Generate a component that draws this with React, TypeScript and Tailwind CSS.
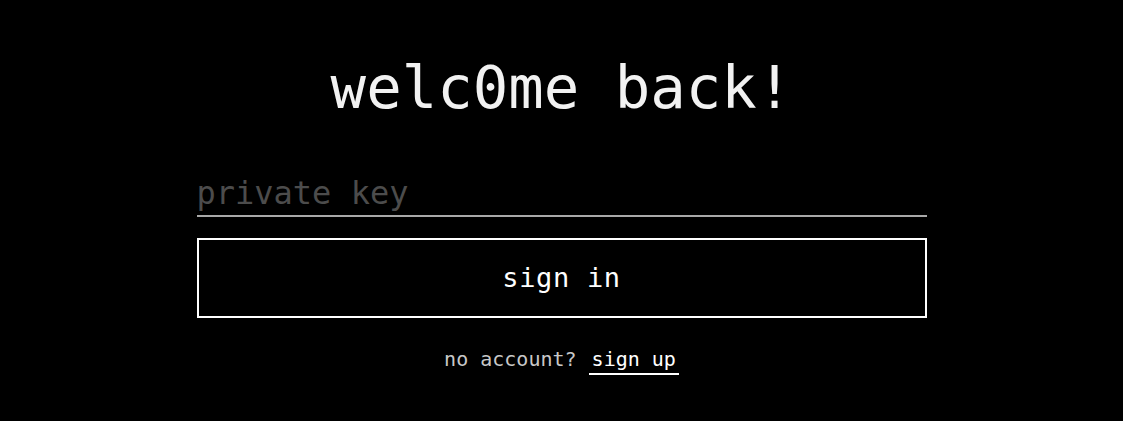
import { useState } from 'react'

export default function App() {
  const [key, setKey] = useState('')

  return (
    <div
      className="min-h-[421px] w-full bg-black text-white flex flex-col items-center pt-[52px]"
      style={{ fontFamily: '"DejaVu Sans Mono", "Liberation Mono", monospace' }}
    >
      <h1 className="text-[59px] leading-[72px] font-light text-[#f2f2f2]">welc0me back!</h1>

      <div className="w-[730px] mt-[49px] flex flex-col">
        <input
          type="password"
          value={key}
          onChange={(e) => setKey(e.target.value)}
          placeholder="private key"
          className="w-full bg-transparent border-b-2 border-[#a8a8a8] text-[32px] leading-[40px] pb-[2px] text-white placeholder:text-[#4c4c4c] focus:outline-none"
        />

        <button className="mt-[21px] h-[80px] w-full border-2 border-white text-[27px] font-medium tracking-wide">
          sign in
        </button>

        <p className="mt-[26px] text-center text-[20px] text-[#c8c8c8] font-light">
          no account?{' '}
          <a className="text-white border-b-2 border-white px-[3px] pb-[2px]">sign up</a>
        </p>
      </div>
    </div>
  )
}
